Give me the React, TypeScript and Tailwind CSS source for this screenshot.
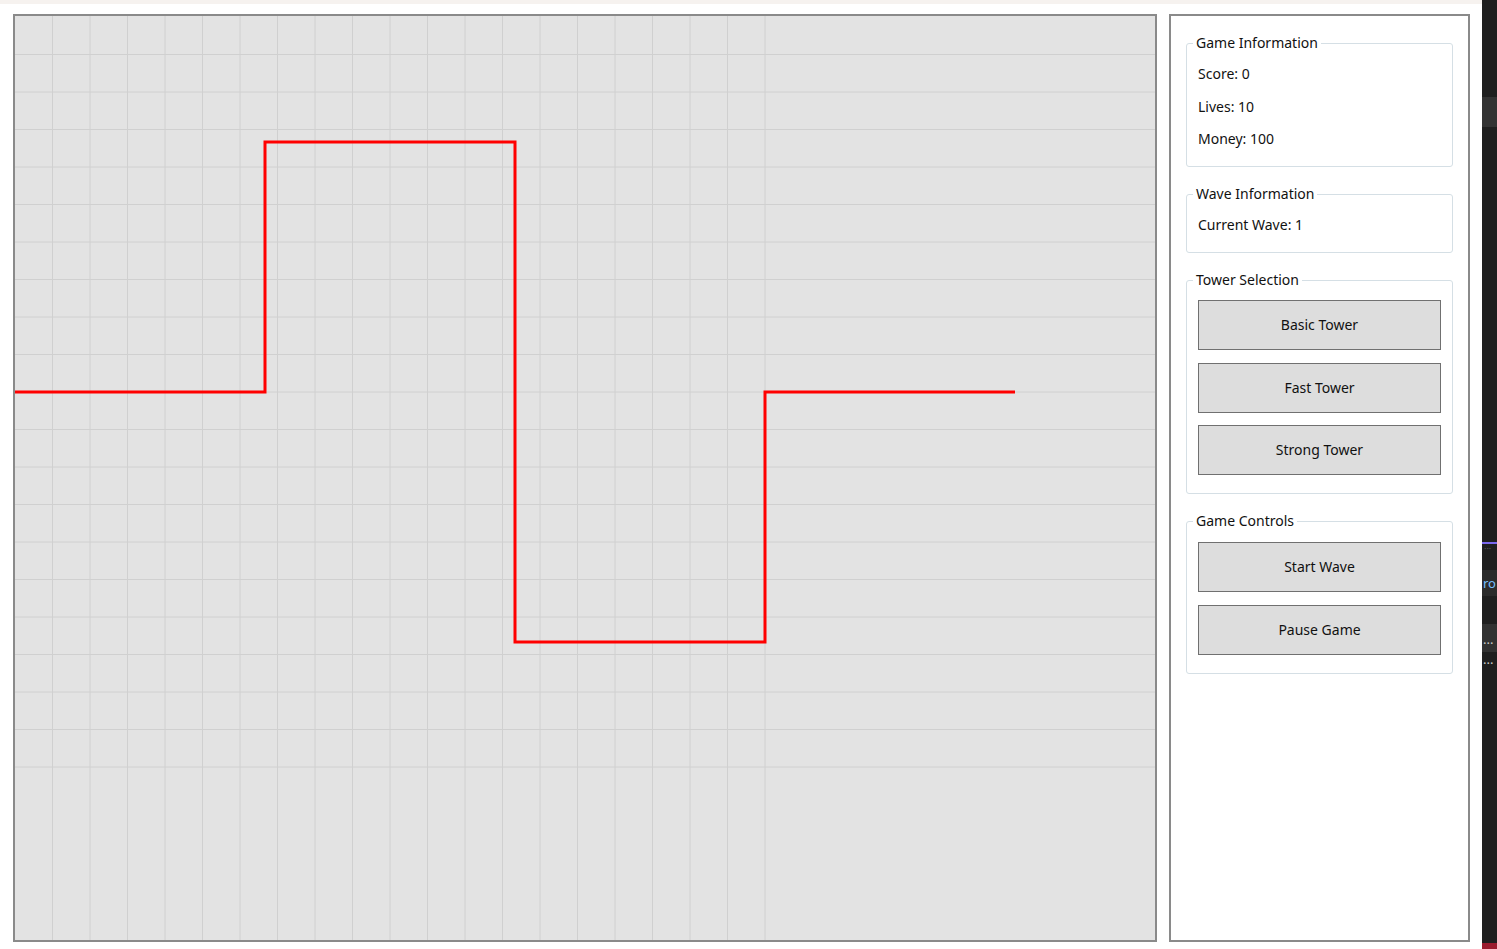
import React from "react";

const CELL = 37.5;
const gridLines = Array.from({ length: 20 }, (_, i) => (i + 1) * CELL);
const pathPoints = "0,375 250,375 250,125 500,125 500,625 750,625 750,375 1000,375";

const GroupBox: React.FC<{ title: string; className?: string; children: React.ReactNode }> = ({
  title,
  className,
  children,
}) => (
  <fieldset
    className={`border border-[#d5dfe5] rounded-[3px] px-[11px] ${className ?? ""}`}
  >
    <legend className="-ml-[5px] px-[3px] leading-[20px] text-[14px] text-[#111]">{title}</legend>
    {children}
  </fieldset>
);

const PanelButton: React.FC<{ label: string }> = ({ label }) => (
  <button className="w-full h-[50px] bg-[#dddddd] border border-[#707070] text-[14px] text-[#111] leading-[20px]">
    {label}
  </button>
);

const GameCanvas: React.FC = () => (
  <div className="w-[1144px] h-[928px] border-2 border-[#8a8a8a] bg-[#e3e3e3]">
    <svg width={1140} height={924} className="block">
      <g transform="translate(0 1)">
        {gridLines.map((x) => (
          <line key={`v${x}`} x1={x} y1={-1} x2={x} y2={924} stroke="#d0d0d0" strokeWidth={1} />
        ))}
        {gridLines.map((y) => (
          <line key={`h${y}`} x1={0} y1={y} x2={1140} y2={y} stroke="#d0d0d0" strokeWidth={1} />
        ))}
        <polyline points={pathPoints} fill="none" stroke="#ff0000" strokeWidth={3} />
      </g>
    </svg>
  </div>
);

const SidePanel: React.FC = () => (
  <div className="w-[301px] h-[928px] border-2 border-[#8a8a8a] bg-white px-[15px] pt-[17px]">
    <GroupBox title="Game Information" className="pb-[17px]">
      <div className="flex flex-col gap-[12.5px] pt-[11px] text-[14px] leading-[20px] text-[#111]">
        <span>Score: 0</span>
        <span>Lives: 10</span>
        <span>Money: 100</span>
      </div>
    </GroupBox>
    <GroupBox title="Wave Information" className="mt-[17px] pb-[17px]">
      <div className="pt-[11px] text-[14px] leading-[20px] text-[#111]">Current Wave: 1</div>
    </GroupBox>
    <GroupBox title="Tower Selection" className="mt-[17px] pb-[18px]">
      <div className="flex flex-col gap-[12.5px] pt-[10px]">
        <PanelButton label="Basic Tower" />
        <PanelButton label="Fast Tower" />
        <PanelButton label="Strong Tower" />
      </div>
    </GroupBox>
    <GroupBox title="Game Controls" className="mt-[17px] pb-[18px]">
      <div className="flex flex-col gap-[12.5px] pt-[11px]">
        <PanelButton label="Start Wave" />
        <PanelButton label="Pause Game" />
      </div>
    </GroupBox>
  </div>
);

const EditorStrip: React.FC = () => (
  <div className="w-[15px] h-[949px] bg-[#1f1f1f] flex flex-col overflow-hidden text-[13px]">
    <div className="h-[97px]" />
    <div className="h-[30px] bg-[#333333]" />
    <div className="h-[415px]" />
    <div className="h-[2px] bg-[#7b68ee]" />
    <div className="h-[10px] text-[#555] leading-[10px] text-[9px] pl-[2px]">···</div>
    <div className="h-[16px]" />
    <div className="h-[26px] bg-[#2b2b2b] text-[#75beff] leading-[26px] whitespace-nowrap pl-[1px]">ro</div>
    <div className="h-[28px]" />
    <div className="h-[28px] bg-[#323232] text-[#cccccc] leading-[30px] pl-[1px]">...</div>
    <div className="h-[20px] text-[#cccccc] leading-[14px] pl-[1px]">...</div>
    <div className="flex-1" />
    <div className="h-[6px] bg-[#9b1c2e]" />
  </div>
);

export default function App() {
  return (
    <div
      className="w-[1497px] h-[949px] flex bg-white overflow-hidden"
      style={{ fontFamily: '"Noto Sans", "Open Sans", sans-serif' }}
    >
      <div className="w-[1482px] flex flex-col">
        <div className="h-[4px] bg-[#f6f2ef]" />
        <div className="flex pl-[13px] pt-[10px] gap-[12px]">
          <GameCanvas />
          <SidePanel />
        </div>
      </div>
      <EditorStrip />
    </div>
  );
}
